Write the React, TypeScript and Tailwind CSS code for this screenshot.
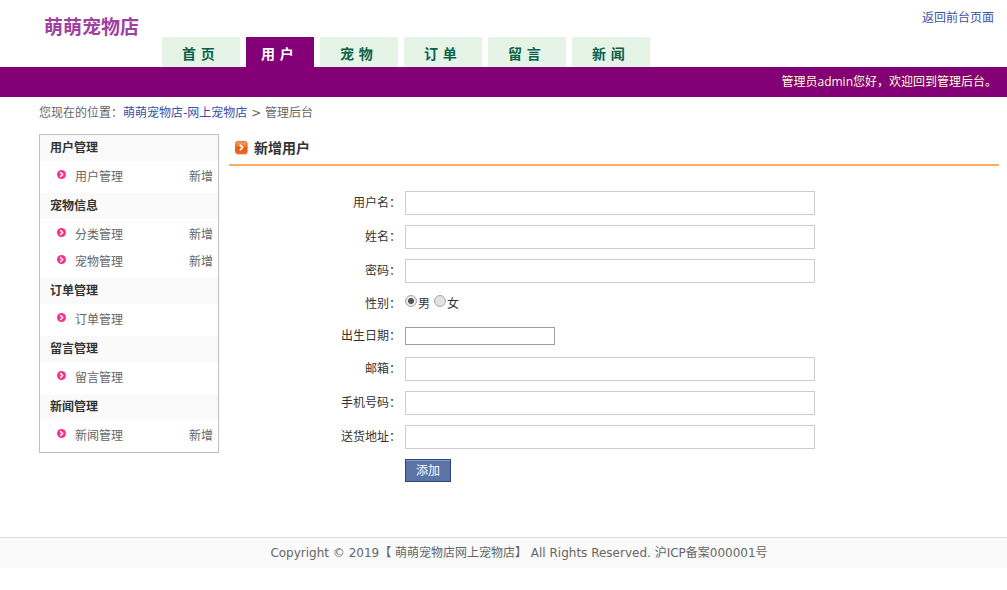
import { Fragment } from "react";

const tabs = ["首 页", "用 户", "宠 物", "订 单", "留 言", "新 闻"];
const activeTab = "用 户";

type MenuItem = { name: string; canAdd: boolean };
type MenuGroup = { title: string; items: MenuItem[] };

const menu: MenuGroup[] = [
  { title: "用户管理", items: [{ name: "用户管理", canAdd: true }] },
  {
    title: "宠物信息",
    items: [
      { name: "分类管理", canAdd: true },
      { name: "宠物管理", canAdd: true },
    ],
  },
  { title: "订单管理", items: [{ name: "订单管理", canAdd: false }] },
  { title: "留言管理", items: [{ name: "留言管理", canAdd: false }] },
  { title: "新闻管理", items: [{ name: "新闻管理", canAdd: true }] },
];

function Bullet() {
  return (
    <svg viewBox="0 0 9 9" className="mb-1 size-[9px] shrink-0" aria-hidden="true">
      <circle cx="4.5" cy="4.5" r="4.5" fill="#f9338a" />
      <path d="M3.3 2.2 5.6 4.5 3.3 6.8" fill="none" stroke="#fff" strokeWidth="1.5" />
    </svg>
  );
}

function TitleIcon() {
  return (
    <svg viewBox="0 0 13 14" className="h-3.5 w-[13px] shrink-0" aria-hidden="true">
      <defs>
        <linearGradient id="title-icon" x1="0" y1="0" x2="0" y2="1">
          <stop offset="0" stopColor="#f5a06c" />
          <stop offset="0.45" stopColor="#ee7429" />
          <stop offset="0.5" stopColor="#e85a10" />
          <stop offset="1" stopColor="#f0671c" />
        </linearGradient>
      </defs>
      <rect x="0.5" y="1" width="12.5" height="13" rx="2.5" fill="#d9d4d0" />
      <rect x="0.5" y="0.5" width="11.5" height="12" rx="2" fill="url(#title-icon)" stroke="#d8622a" strokeWidth="0.8" />
      <path d="M4.8 3.9 7.6 6.5 4.8 9.1" fill="none" stroke="#fff" strokeWidth="1.6" />
    </svg>
  );
}

function Header() {
  return (
    <header>
      <div className="flex h-[67px] items-stretch pr-[13px] pl-11">
        <h1 className="w-[118px] shrink-0 pt-3 text-[19px] leading-[30px] font-bold text-[#a040a0]">萌萌宠物店</h1>
        <nav className="flex items-end gap-1.5">
          {tabs.map((tab) => (
            <a
              key={tab}
              href="#"
              className={
                tab === activeTab
                  ? "h-[30px] w-[68px] bg-[#840077] pt-1 pl-[15px] text-sm leading-[26px] font-bold whitespace-nowrap text-white"
                  : "h-[30px] w-[78px] bg-[#e6f4e8] pt-1 pl-5 text-sm leading-[26px] font-bold whitespace-nowrap text-[#0b6148]"
              }
            >
              {tab}
            </a>
          ))}
        </nav>
        <a href="#" className="ml-auto pt-2 leading-5 text-[#3a4fa5]">
          返回前台页面
        </a>
      </div>
      <p className="bg-[#840077] pr-2.5 text-right font-['Open_Sans','Noto_Sans_CJK_SC',sans-serif] leading-[30px] text-[#ffffcc]">
        管理员admin您好，欢迎回到管理后台。
      </p>
    </header>
  );
}

function Sidebar() {
  return (
    <aside className="w-[180px] shrink-0 self-start border border-[#bfbfbf]">
      {menu.map((group) => (
        <Fragment key={group.title}>
          <h2 className="bg-[#fafafa] pl-2.5 leading-[26px] font-bold text-[#333]">{group.title}</h2>
          <ul className="pt-0.5 pb-[3px]">
            {group.items.map((item) => (
              <li key={item.name} className="flex h-[27px] items-center pr-[5px] pl-[17px] text-[#666]">
                <Bullet />
                <a href="#" className="ml-[9px]">
                  {item.name}
                </a>
                {item.canAdd && (
                  <a href="#" className="ml-auto">
                    新增
                  </a>
                )}
              </li>
            ))}
          </ul>
        </Fragment>
      ))}
    </aside>
  );
}

function TextRow({ id, label, type = "text" }: { id: string; label: string; type?: string }) {
  return (
    <div className="flex h-6 items-center gap-1">
      <label htmlFor={id} className="w-[172px] shrink-0 text-right">
        {label}：
      </label>
      <input id={id} type={type} className="h-6 w-[410px] min-w-0 border border-[#ccc] bg-white px-1 outline-none" />
    </div>
  );
}

const radioClass =
  "mt-0.5 size-3 appearance-none rounded-full border border-[#a6a6a6] bg-[#e2e2e2] checked:bg-[radial-gradient(circle,#555_0_2.5px,#e8e8e8_3.5px)]";

function UserForm() {
  return (
    <form className="flex flex-col gap-2.5 pt-[25px] text-[#333]" onSubmit={(e) => e.preventDefault()}>
      <TextRow id="username" label="用户名" />
      <TextRow id="realname" label="姓名" />
      <TextRow id="password" label="密码" type="password" />
      <fieldset className="flex h-6 items-start gap-1" aria-labelledby="gender">
        <span id="gender" className="w-[172px] shrink-0 text-right leading-[22px]">
          性别：
        </span>
        <div className="flex gap-1 leading-[22px]">
          <label className="flex items-start gap-px">
            <input type="radio" name="gender" defaultChecked className={radioClass} />
            男
          </label>
          <label className="flex items-start gap-px">
            <input type="radio" name="gender" className={radioClass} />
            女
          </label>
        </div>
      </fieldset>
      <div className="flex h-5 items-start gap-1">
        <label htmlFor="birthday" className="w-[172px] shrink-0 text-right leading-[18px]">
          出生日期：
        </label>
        <input id="birthday" type="text" className="h-[18px] w-[150px] border border-[#a0a0a0] bg-white px-1 outline-none" />
      </div>
      <TextRow id="email" label="邮箱" />
      <TextRow id="phone" label="手机号码" />
      <TextRow id="address" label="送货地址" />
      <button
        type="submit"
        className="ml-44 h-[23px] w-[46px] border border-[#29447e] bg-[#5b74a8] text-white shadow-[inset_0_1px_0_#8a9cc2]"
      >
        添加
      </button>
    </form>
  );
}

export default function App() {
  return (
    <div className="bg-white font-['DejaVu_Sans','Noto_Sans_CJK_SC',sans-serif] text-xs leading-5 text-[#666]">
      <Header />
      <div className="pr-2 pl-[39px]">
        <p className="pt-1.5 leading-5">
          您现在的位置：
          <a href="#" className="text-[#3a4fa5]">
            萌萌宠物店-网上宠物店
          </a>{" "}
          &gt; 管理后台
        </p>
        <div className="flex gap-2.5 pt-[11px] pb-[55px]">
          <Sidebar />
          <main className="min-w-0 flex-1">
            <h2 className="flex h-8 items-center gap-1.5 border-b-2 border-[#fbac62] pb-0.5 pl-1.5 text-sm font-bold text-[#333]">
              <TitleIcon />
              新增用户
            </h2>
            <UserForm />
          </main>
        </div>
      </div>
      <footer className="border-t border-[#ddd] bg-[#fafafa] pr-2 pl-[39px] text-center leading-[30px]">
        Copyright © 2019【 萌萌宠物店网上宠物店】 All Rights Reserved. 沪ICP备案000001号
      </footer>
    </div>
  );
}
